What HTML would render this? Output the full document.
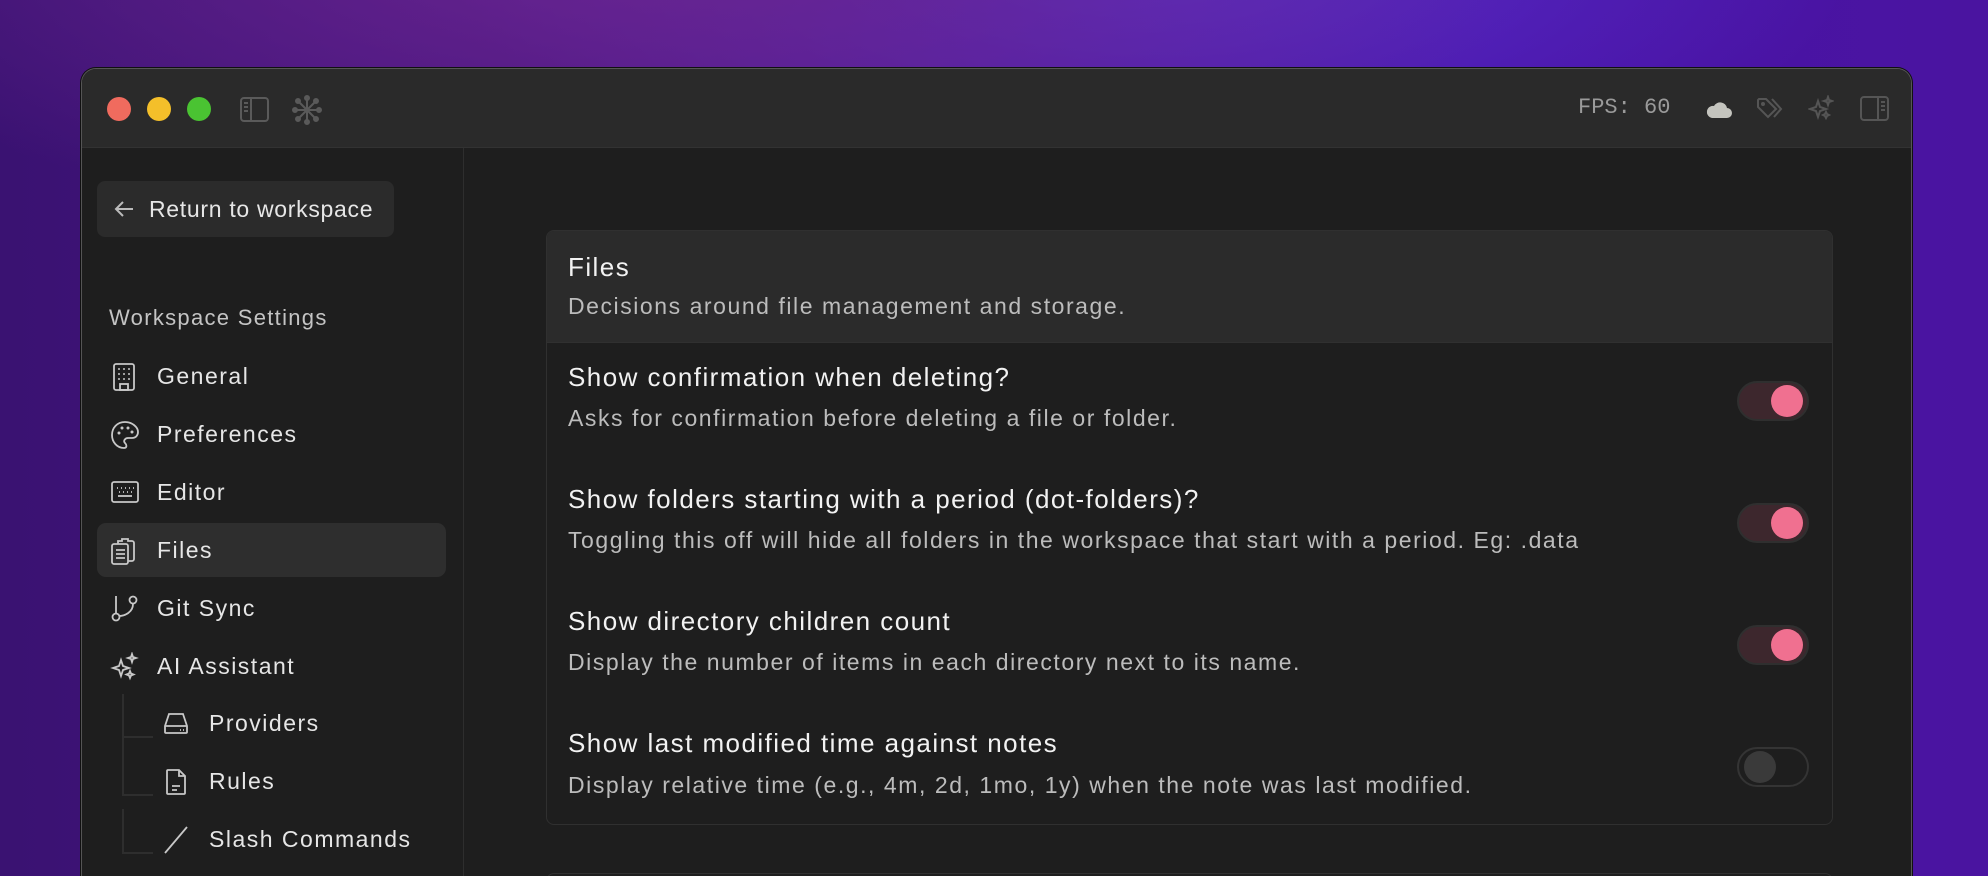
<!DOCTYPE html>
<html><head><meta charset="utf-8"><style>
*{margin:0;padding:0;box-sizing:border-box}
html,body{width:1988px;height:876px;overflow:hidden}
body{position:relative;font-family:"Liberation Sans",sans-serif;
background:radial-gradient(ellipse 900px 300px at 650px -60px,#6a2590 0%,rgba(106,37,144,0) 100%),
radial-gradient(ellipse 700px 250px at 1150px -40px,#5a30c8 0%,rgba(90,48,200,0) 100%),
linear-gradient(90deg,#3a1272 0%,#4a1585 40%,#4812a8 75%,#4a14a0 100%)}
.win{position:absolute;left:81px;top:68px;width:1831px;height:808px;border-radius:15px 15px 0 0;background:#1e1e1e;overflow:hidden;border:1px solid #555;border-bottom:none;box-shadow:0 0 0 1px #111}
.tb{position:absolute;left:0;top:0;right:0;height:79px;background:#2a2a2a;border-bottom:1px solid #323232}
.dot{position:absolute;top:28px;width:24px;height:24px;border-radius:50%}
.side{position:absolute;left:0;top:79px;width:382px;bottom:0;border-right:1px solid #2e2e2e}
.ret{position:absolute;left:15px;top:33px;width:297px;height:56px;border-radius:8px;background:#2b2b2b;color:#e6e6e6;font-size:23px;letter-spacing:0.7px}
.ret span{position:absolute;left:52px;top:15px}
.ws{position:absolute;left:27px;top:157px;color:#c4c4c4;font-size:22px;letter-spacing:1.3px}
.item{position:absolute;left:15px;width:349px;height:54px;border-radius:9px;color:#e6e6e6;font-size:23px;letter-spacing:1.5px}
.item .t{position:absolute;left:60px;top:14px}
.item svg{position:absolute;left:13px;top:13px}
.item.act{background:#2e2e2e}
.card{position:absolute;left:464px;top:161px;width:1287px;height:595px;border:1px solid #303030;border-radius:8px;overflow:hidden}
.ch{height:112px;background:#2b2b2b;border-bottom:1px solid #303030;position:relative}
.tt{position:absolute;left:21px;color:#f2f2f2;font-size:26px;letter-spacing:1.45px}
.dd{position:absolute;left:21px;color:#bcbcbc;font-size:23px;letter-spacing:1.55px}
.tg{position:absolute;left:1190px;width:72px;height:40px;border-radius:20px;background:#3d272d;border:2px solid #2f2f2f}
.tg i{position:absolute;right:4px;top:2px;width:32px;height:32px;border-radius:50%;background:#f07090}
.tg.off{background:#1e1e1e;border-color:#343434}
.tg.off i{left:5px;right:auto;background:#3a3a3a}
.tree{position:absolute;border-left:2px solid #2e2e2e;border-bottom:2px solid #2e2e2e;width:31px}
</style></head><body>
<div class="win">
 <div class="tb">
  <div class="dot" style="left:25px;background:#f06b5e"></div>
  <div class="dot" style="left:65px;background:#f4bf2a"></div>
  <div class="dot" style="left:105px;background:#4ac332"></div>
  <svg style="position:absolute;left:158px;top:28px" width="30" height="25" viewBox="0 0 30 25" fill="none" stroke="#5a5a5a" stroke-width="2"><rect x="1" y="1" width="27" height="23" rx="3"/><line x1="11" y1="1" x2="11" y2="24"/><line x1="4" y1="6" x2="8" y2="6"/><line x1="4" y1="10" x2="8" y2="10"/><line x1="4" y1="14" x2="8" y2="14"/></svg>
  <svg style="position:absolute;left:210px;top:26px" width="30" height="30" viewBox="0 0 30 30" stroke="#5a5a5a" stroke-width="2" fill="#5a5a5a"><line x1="15" y1="3" x2="15" y2="27"/><line x1="3" y1="15" x2="27" y2="15"/><line x1="6" y1="6" x2="24" y2="24"/><line x1="24" y1="6" x2="6" y2="24"/><circle cx="15" cy="3" r="2"/><circle cx="15" cy="27" r="2"/><circle cx="3" cy="15" r="2"/><circle cx="27" cy="15" r="2"/><circle cx="6" cy="6" r="2"/><circle cx="24" cy="24" r="2"/><circle cx="24" cy="6" r="2"/><circle cx="6" cy="24" r="2"/></svg>
  <div style="position:absolute;left:1496px;top:26px;font-family:'Liberation Mono',monospace;font-size:22px;color:#9a9a9a">FPS: 60</div>
  <svg style="position:absolute;left:1624px;top:29px" width="26" height="22" viewBox="0 0 26 22"><path d="M6 20h15a5 5 0 0 0 0-10 7 7 0 0 0-13-2 6 6 0 0 0-2 12z" fill="#c4c4be"/></svg>
  <svg style="position:absolute;left:1674px;top:28px" width="28" height="24" viewBox="0 0 28 24" fill="none" stroke="#555" stroke-width="2"><path d="M2 3v7l10 10 8-8L10 2H3z"/><path d="M16 2l9 10-7 8"/><circle cx="7" cy="7" r="1" fill="#555"/></svg>
  <svg style="position:absolute;left:1726px;top:26px" width="26" height="26" viewBox="0 0 26 26" fill="none" stroke="#555" stroke-width="2"><path d="M10 6l2 6 6 2-6 2-2 6-2-6-6-2 6-2z"/><path d="M20 2l1 3 3 1-3 1-1 3-1-3-3-1 3-1z"/><path d="M18 17l1 2 2 1-2 1-1 2-1-2-2-1 2-1z"/></svg>
  <svg style="position:absolute;left:1778px;top:27px" width="30" height="25" viewBox="0 0 30 25" fill="none" stroke="#555" stroke-width="2"><rect x="1" y="1" width="27" height="23" rx="3"/><line x1="18" y1="1" x2="18" y2="24"/><line x1="21" y1="6" x2="25" y2="6"/><line x1="21" y1="10" x2="25" y2="10"/><line x1="21" y1="14" x2="25" y2="14"/></svg>
 </div>
 <div class="side">
  <div class="ret"><svg style="position:absolute;left:16px;top:18px" width="22" height="20" viewBox="0 0 22 20" fill="none" stroke="#bbb" stroke-width="2"><path d="M20 10H3M10 3L3 10l7 7"/></svg><span>Return to workspace</span></div>
  <div class="ws">Workspace Settings</div>
  <div class="item" style="top:201px"><svg width="28" height="30" viewBox="0 0 28 30" fill="none" stroke="#c8c8c8" stroke-width="1.8"><rect x="4" y="2" width="20" height="26" rx="2"/><rect x="10" y="22" width="8" height="6"/><g fill="#c8c8c8" stroke="none"><circle cx="9" cy="7" r="1"/><circle cx="14" cy="7" r="1"/><circle cx="19" cy="7" r="1"/><circle cx="9" cy="12" r="1"/><circle cx="14" cy="12" r="1"/><circle cx="19" cy="12" r="1"/><circle cx="9" cy="17" r="1"/><circle cx="14" cy="17" r="1"/><circle cx="19" cy="17" r="1"/></g></svg><span class="t">General</span></div>
  <div class="item" style="top:259px"><svg width="30" height="30" viewBox="0 0 30 30" fill="none" stroke="#c8c8c8" stroke-width="1.8"><path d="M15 2C7 2 2 8 2 15s5 13 12 13c3 0 3-3 1-5-2-2 0-5 3-5h4c4 0 6-3 6-6C28 7 22 2 15 2z"/><g fill="#c8c8c8" stroke="none"><circle cx="9" cy="13" r="1.5"/><circle cx="12" cy="8" r="1.5"/><circle cx="18" cy="8" r="1.5"/><circle cx="22" cy="12" r="1.5"/></g></svg><span class="t">Preferences</span></div>
  <div class="item" style="top:317px"><svg width="30" height="28" viewBox="0 0 30 28" fill="none" stroke="#c8c8c8" stroke-width="1.8"><rect x="2" y="4" width="26" height="20" rx="2"/><line x1="8" y1="18" x2="22" y2="18"/><path d="M7 10h1M11 10h1M15 10h1M19 10h1M23 10h1M9 14h1M13 14h1M17 14h1M21 14h1"/></svg><span class="t">Editor</span></div>
  <div class="item act" style="top:375px"><svg width="28" height="30" viewBox="0 0 28 30" fill="none" stroke="#c8c8c8" stroke-width="1.8"><rect x="2" y="8" width="16" height="20" rx="2"/><path d="M8 8V5h4V3h6v2h4a2 2 0 0 1 2 2v16a2 2 0 0 1-2 2h-4"/><path d="M6 14h9M6 18h9M6 22h9"/></svg><span class="t">Files</span></div>
  <div class="item" style="top:433px"><svg width="30" height="30" viewBox="0 0 30 30" fill="none" stroke="#c8c8c8" stroke-width="1.8"><circle cx="6" cy="23" r="3.5"/><circle cx="23" cy="6" r="3.5"/><path d="M6 2v17M23 10c0 8-8 12-14 12"/></svg><span class="t">Git Sync</span></div>
  <div class="item" style="top:491px"><svg width="30" height="30" viewBox="0 0 30 30" fill="none" stroke="#c8c8c8" stroke-width="1.8"><path d="M11 8l2 6 6 2-6 2-2 6-2-6-6-2 6-2z"/><path d="M22 2l1 3 3 1-3 1-1 3-1-3-3-1 3-1z"/><path d="M20 19l1 2.5 2.5 1-2.5 1-1 2.5-1-2.5-2.5-1 2.5-1z"/></svg><span class="t">AI Assistant</span></div>
  <div class="tree" style="left:40px;top:546px;height:44px"></div>
  <div class="tree" style="left:40px;top:590px;height:58px"></div>
  <div class="tree" style="left:40px;top:661px;height:45px"></div>
  <div class="item" style="top:548px;left:67px;width:290px"><svg width="28" height="28" viewBox="0 0 28 28" fill="none" stroke="#c8c8c8" stroke-width="1.8"><path d="M3 17l4-12h14l4 12v6a1 1 0 0 1-1 1H4a1 1 0 0 1-1-1z"/><line x1="3" y1="17" x2="25" y2="17"/><path d="M18 21h1M21 21h1"/></svg><span class="t">Providers</span></div>
  <div class="item" style="top:606px;left:67px;width:290px"><svg width="28" height="30" viewBox="0 0 28 30" fill="none" stroke="#c8c8c8" stroke-width="1.8"><path d="M6 3h11l6 6v17a1 1 0 0 1-1 1H6a1 1 0 0 1-1-1V4a1 1 0 0 1 1-1z"/><path d="M17 3v6h6M10 19h8M10 23h5"/></svg><span class="t">Rules</span></div>
  <div class="item" style="top:664px;left:67px;width:290px"><svg width="28" height="30" viewBox="0 0 28 30" fill="none" stroke="#c8c8c8" stroke-width="1.8"><path d="M25 2L3 28"/></svg><span class="t">Slash Commands</span></div>
 </div>
 <div class="card">
  <div class="ch"><div class="tt" style="top:21px">Files</div><div class="dd" style="top:62px">Decisions around file management and storage.</div></div>
  <div class="tt" style="top:131px">Show confirmation when deleting?</div>
  <div class="dd" style="top:174px">Asks for confirmation before deleting a file or folder.</div>
  <div class="tg" style="top:150px"><i></i></div>
  <div class="tt" style="top:253px">Show folders starting with a period (dot-folders)?</div>
  <div class="dd" style="top:296px">Toggling this off will hide all folders in the workspace that start with a period. Eg: .data</div>
  <div class="tg" style="top:272px"><i></i></div>
  <div class="tt" style="top:375px">Show directory children count</div>
  <div class="dd" style="top:418px">Display the number of items in each directory next to its name.</div>
  <div class="tg" style="top:394px"><i></i></div>
  <div class="tt" style="top:497px">Show last modified time against notes</div>
  <div class="dd" style="top:541px">Display relative time (e.g., 4m, 2d, 1mo, 1y) when the note was last modified.</div>
  <div class="tg off" style="top:516px"><i></i></div>
 </div>
 <div style="position:absolute;left:464px;top:804px;width:1287px;height:100px;border:1px solid #303030;border-radius:8px;background:#1e1e1e"></div>
</div>
</body></html>
